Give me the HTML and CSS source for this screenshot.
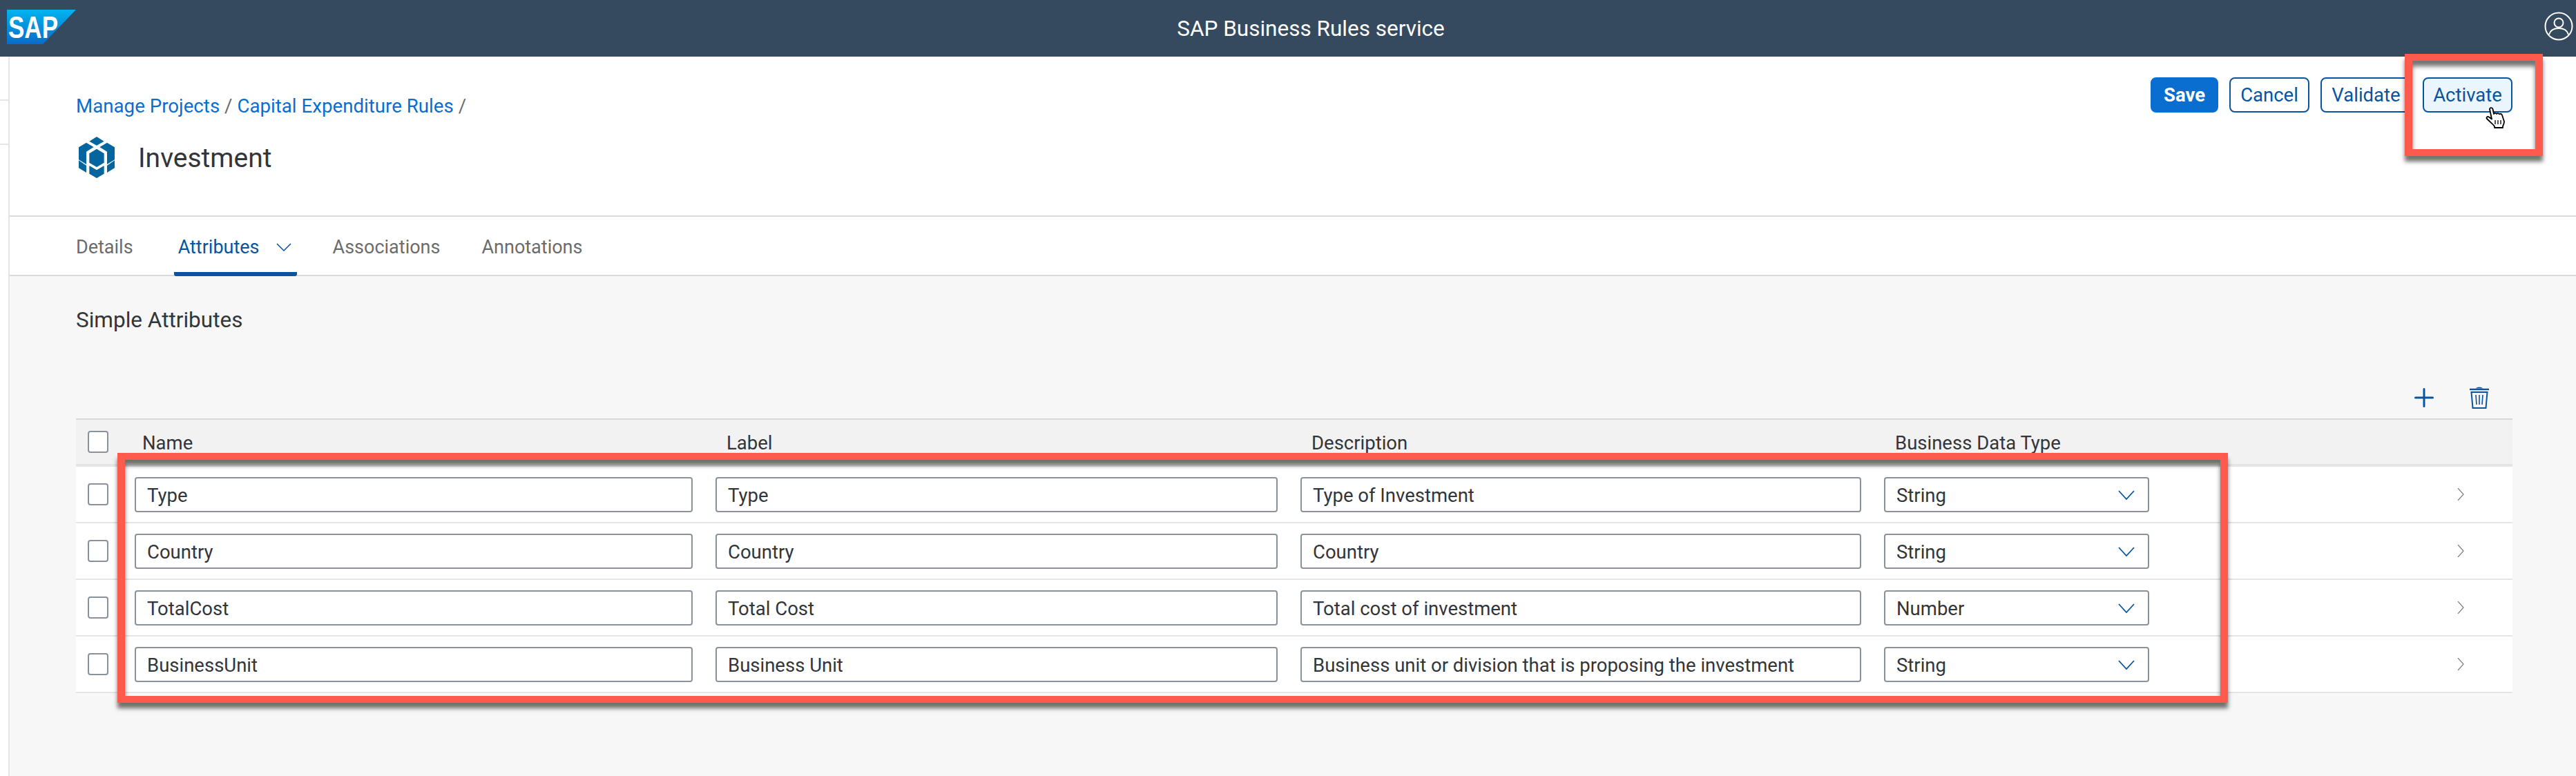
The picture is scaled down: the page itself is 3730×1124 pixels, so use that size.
FILE: index.html
```html
<!DOCTYPE html>
<html lang="en">
<head>
  <meta charset="UTF-8">
  <title>SAP Business Rules service</title>
  <link rel="stylesheet" href="styles.css">
</head>
<body>

  <header class="shell-bar">
    <svg class="sap-logo" viewBox="0 0 100 50">
      <defs>
        <linearGradient id="sapBlue" x1="0" y1="0" x2="0" y2="1">
          <stop offset="0" stop-color="#00b4f0"/>
          <stop offset="1" stop-color="#0a6bc8"/>
        </linearGradient>
      </defs>
      <polygon points="0,0 100,0 52,50 0,50" fill="url(#sapBlue)"/>
      <text x="2" y="41" class="sap-logo-text" textLength="72" lengthAdjust="spacingAndGlyphs">SAP</text>
    </svg>
    <div class="shell-title">SAP Business Rules service</div>
    <svg class="user-icon" viewBox="0 0 42 42" fill="none" stroke="#fff" stroke-width="2">
      <circle cx="21" cy="21" r="19.5"/>
      <circle cx="21" cy="16" r="6.5"/>
      <path d="M7 33c2-7 7-9 14-9s12 2 14 9"/>
    </svg>
  </header>

  <div class="layout">
    <div class="rail">
      <div class="rail-row"></div>
      <div class="rail-row"></div>
    </div>

    <main class="content">
      <section class="page-head">
        <div class="head-left">
          <div class="breadcrumb">
            <a>Manage Projects</a> / <a>Capital Expenditure Rules</a> /
          </div>
          <div class="page-title">
            <svg class="vocab-icon" viewBox="72 52 156 180" fill="#05659f">
              <polygon points="150,52 182,72 150,90 118,72"/>
              <polygon points="150,105 182,125 182,165 150,184 118,165 118,125"/>
              <polygon points="105,78 137,97 105,117 105,172 72,152 72,98"/>
              <polygon points="195,78 163,97 195,117 195,172 228,152 228,98"/>
              <polygon points="72,155 105,177 105,208 72,188"/>
              <polygon points="228,155 195,177 195,208 228,188"/>
              <polygon points="118,178 150,197 182,178 182,213 150,232 118,213"/>
            </svg>
            <h1>Investment</h1>
          </div>
        </div>
        <div class="actions">
          <button class="btn btn-primary">Save</button>
          <button class="btn btn-cancel">Cancel</button>
          <button class="btn btn-validate">Validate</button>
          <button class="btn btn-hover">Activate</button>
        </div>
      </section>

      <nav class="tabs">
        <a class="tab">Details</a>
        <a class="tab tab-active">Attributes
          <svg class="tab-chevron" viewBox="0 0 22 12" fill="none" stroke="#0854a0" stroke-width="1.5"><path d="M1 1l10 10L21 1"/></svg>
        </a>
        <a class="tab tab-tight">Associations</a>
        <a class="tab">Annotations</a>
      </nav>

      <section class="panel">
        <h2>Simple Attributes</h2>

        <div class="toolbar">
          <svg class="tool-icon" viewBox="0 0 28 28" stroke="#0854a0" stroke-width="3" stroke-linecap="round"><path d="M14 1.5v25M1.5 14h25"/></svg>
          <svg class="tool-icon trash" viewBox="0 0 28 32" fill="none" stroke="#0854a0" stroke-width="2">
            <path d="M0 4h28" stroke-width="2.4"/>
            <path d="M9 2.5c1-2.5 9-2.5 10 0z" fill="#0854a0" stroke="none"/>
            <path d="M2.5 8h23L23.5 31h-19z"/>
            <path d="M9 12l1 14M14 12v14M19 12l-1 14" stroke-width="1.6"/>
          </svg>
        </div>

        <div class="attr-table">
          <div class="attr-row attr-head">
            <span class="checkbox"></span>
            <span class="th th-name">Name</span>
            <span class="th">Label</span>
            <span class="th">Description</span>
            <span class="th">Business Data Type</span>
          </div>

          <div class="attr-row">
            <span class="checkbox"></span>
            <div class="field">Type</div>
            <div class="field">Type</div>
            <div class="field">Type of Investment</div>
            <div class="field select">String
              <svg class="select-chevron" viewBox="0 0 24 14" fill="none" stroke="#0854a0" stroke-width="1.8"><path d="M1 1l11 12L23 1"/></svg>
            </div>
            <svg class="row-chevron" viewBox="0 0 10 18" fill="none" stroke="#7f8489" stroke-width="1.3"><path d="M1 0l8 9-8 9"/></svg>
          </div>

          <div class="attr-row">
            <span class="checkbox"></span>
            <div class="field">Country</div>
            <div class="field">Country</div>
            <div class="field">Country</div>
            <div class="field select">String
              <svg class="select-chevron" viewBox="0 0 24 14" fill="none" stroke="#0854a0" stroke-width="1.8"><path d="M1 1l11 12L23 1"/></svg>
            </div>
            <svg class="row-chevron" viewBox="0 0 10 18" fill="none" stroke="#7f8489" stroke-width="1.3"><path d="M1 0l8 9-8 9"/></svg>
          </div>

          <div class="attr-row">
            <span class="checkbox"></span>
            <div class="field">TotalCost</div>
            <div class="field">Total Cost</div>
            <div class="field">Total cost of investment</div>
            <div class="field select">Number
              <svg class="select-chevron" viewBox="0 0 24 14" fill="none" stroke="#0854a0" stroke-width="1.8"><path d="M1 1l11 12L23 1"/></svg>
            </div>
            <svg class="row-chevron" viewBox="0 0 10 18" fill="none" stroke="#7f8489" stroke-width="1.3"><path d="M1 0l8 9-8 9"/></svg>
          </div>

          <div class="attr-row">
            <span class="checkbox"></span>
            <div class="field">BusinessUnit</div>
            <div class="field">Business Unit</div>
            <div class="field">Business unit or division that is proposing the investment</div>
            <div class="field select">String
              <svg class="select-chevron" viewBox="0 0 24 14" fill="none" stroke="#0854a0" stroke-width="1.8"><path d="M1 1l11 12L23 1"/></svg>
            </div>
            <svg class="row-chevron" viewBox="0 0 10 18" fill="none" stroke="#7f8489" stroke-width="1.3"><path d="M1 0l8 9-8 9"/></svg>
          </div>
        </div>
      </section>
    </main>
  </div>

  <!-- red callouts and the pointer sit over the page -->
  <div class="callout callout-activate"></div>
  <div class="callout callout-table"></div>
  <svg class="pointer" viewBox="0 0 30 32" fill="#fff" stroke="#000" stroke-width="1.8" stroke-linejoin="round">
    <path d="M7 4c0-2.500 4-2.500 4.500 0l1.500 7c1-1.500 3-1.500 4 0 1-1.200 3-1.200 4 .3 1.200-1 3.500-.5 4 1.500l3 9.200c0 3-1 5-2 7v2H14v-2c-2-3-6-6-11-11-1.500-1.500.5-4 3-2.500l4 3z"/>
    <path d="M15 20v6M19 20v6M23 20v6" stroke-width="1.300"/>
  </svg>

</body>
</html>
```

FILE: styles.css
```css
* {
  box-sizing: border-box;
}

body {
  margin: 0;
  width: 3730px;
  height: 1124px;
  overflow: hidden;
  position: relative;
  font-family: Roboto, Arial, sans-serif;
  font-size: 27.500px;
  color: #32363a;
  background: #fff;
}

/* top bar */
.shell-bar {
  height: 82px;
  padding-left: 66px;
  background: #354a5f;
  display: flex;
  align-items: center;
  justify-content: center;
  position: relative;
}

.sap-logo {
  position: absolute;
  left: 10px;
  top: 14px;
  width: 100px;
  height: 50px;
}

.sap-logo-text {
  font-family: "Liberation Sans", Arial, sans-serif;
  font-weight: bold;
  font-size: 44px;
  fill: #fff;
}

.shell-title {
  color: #fff;
  font-size: 31.500px;
}

.user-icon {
  position: absolute;
  right: 4px;
  top: 17px;
  width: 42px;
  height: 42px;
}

/* page */
.layout {
  display: flex;
  height: 1042px;
}

.rail {
  width: 14px;
  border-right: 2px solid #e5e5e5;
}

.rail-row {
  height: 64px;
  border-bottom: 2px solid #e5e5e5;
}

.content {
  flex: 1;
  background: #f7f7f7;
}

.page-head {
  height: 232px;
  padding: 30px 92px 0 96px;
  display: flex;
  justify-content: space-between;
  background: #fff;
  border-bottom: 2px solid #d9d9d9;
}

.breadcrumb {
  margin-top: 22px;
  font-size: 27.700px;
  line-height: 40px;
  color: #6a6d70;
}

.breadcrumb a {
  color: #0a6ed1;
}

.page-title {
  display: flex;
  align-items: center;
  gap: 34px;
  margin-top: 24px;
  padding-left: 4px;
}

.vocab-icon {
  width: 52px;
  height: 60px;
}

h1 {
  margin: 2px 0 0;
  font-size: 39px;
  font-weight: normal;
}

.actions {
  display: flex;
  align-items: flex-start;
  gap: 16px;
}

.btn {
  height: 51px;
  padding: 0;
  font-family: inherit;
  font-size: 27.500px;
  color: #0854a0;
  background: #fff;
  border: 2px solid #0854a0;
  border-radius: 8px;
}

.btn-primary {
  width: 98px;
  color: #fff;
  font-weight: bold;
  background: #0a6ed1;
  border-color: #0a6ed1;
}

.btn-cancel {
  width: 116px;
}

.btn-validate {
  width: 132px;
}

.btn-hover {
  width: 130px;
  background: #ebf5fe;
}

/* tabs */
.tabs {
  height: 86px;
  padding: 0 0 0 96px;
  display: flex;
  font-size: 27px;
  background: #fff;
  border-bottom: 2px solid #d9d9d9;
}

.tab {
  display: flex;
  align-items: center;
  gap: 24px;
  height: 86px;
  margin-right: 63px;
  padding-top: 2px;
  color: #6a6d70;
}

.tab-tight {
  margin-right: 60px;
}

.tab-active {
  color: #0854a0;
  margin-left: -4px;
  margin-right: 52px;
  padding: 8px 8px 0 6px;
  border-bottom: 6px solid #0854a0;
  border-radius: 3px;
}

.tab-chevron {
  width: 22px;
  height: 12px;
}

/* attributes */
.panel {
  padding: 0 92px 0 96px;
}

h2 {
  margin: 0;
  height: 130px;
  padding-top: 46px;
  font-size: 31.500px;
  line-height: 36px;
  font-weight: normal;
}

.toolbar {
  display: flex;
  justify-content: flex-end;
  align-items: center;
  gap: 52px;
  height: 76px;
  padding: 16px 34px 0 0;
}

.tool-icon {
  width: 28px;
  height: 28px;
}

.trash {
  height: 32px;
}

.attr-table {
  border-top: 2px solid #d9d9d9;
}

.attr-row {
  display: grid;
  grid-template-columns: 35px 808px 814px 812px 384px 1fr;
  column-gap: 33px;
  align-items: center;
  height: 82px;
  padding-left: 17px;
  background: #fff;
  border-bottom: 2px solid #e5e5e5;
}

.attr-head {
  height: 68px;
  background: #f2f2f2;
  border-bottom: 4px solid #e5e5e5;
}

.checkbox {
  display: block;
  width: 30px;
  height: 32px;
  background: #fff;
  border: 2px solid #89919a;
  border-radius: 4px;
}

.th {
  padding: 2px 0 0 16px;
  white-space: nowrap;
}

.th-name {
  padding-left: 11px;
}

.field {
  height: 51px;
  padding: 2px 16px 0;
  display: flex;
  align-items: center;
  justify-content: space-between;
  background: #fff;
  border: 2px solid #89919a;
  border-radius: 4px;
  white-space: nowrap;
}

.select-chevron {
  width: 24px;
  height: 14px;
  margin-right: 3px;
}

.row-chevron {
  width: 10px;
  height: 18px;
  justify-self: end;
  margin-right: 70px;
}

/* overlays */
.callout {
  position: absolute;
  border: solid #ff5a4d;
  border-width: 10px 11px;
  box-shadow: 0 8px 6px rgba(0, 0, 0, 0.55), inset 0 8px 6px rgba(0, 0, 0, 0.55);
}

.callout-activate {
  left: 3482px;
  top: 78px;
  width: 200px;
  height: 148px;
}

.callout-table {
  left: 170px;
  top: 656px;
  width: 3056px;
  height: 362px;
}

.pointer {
  position: absolute;
  left: 3598px;
  top: 154px;
  width: 30px;
  height: 32px;
}
```
